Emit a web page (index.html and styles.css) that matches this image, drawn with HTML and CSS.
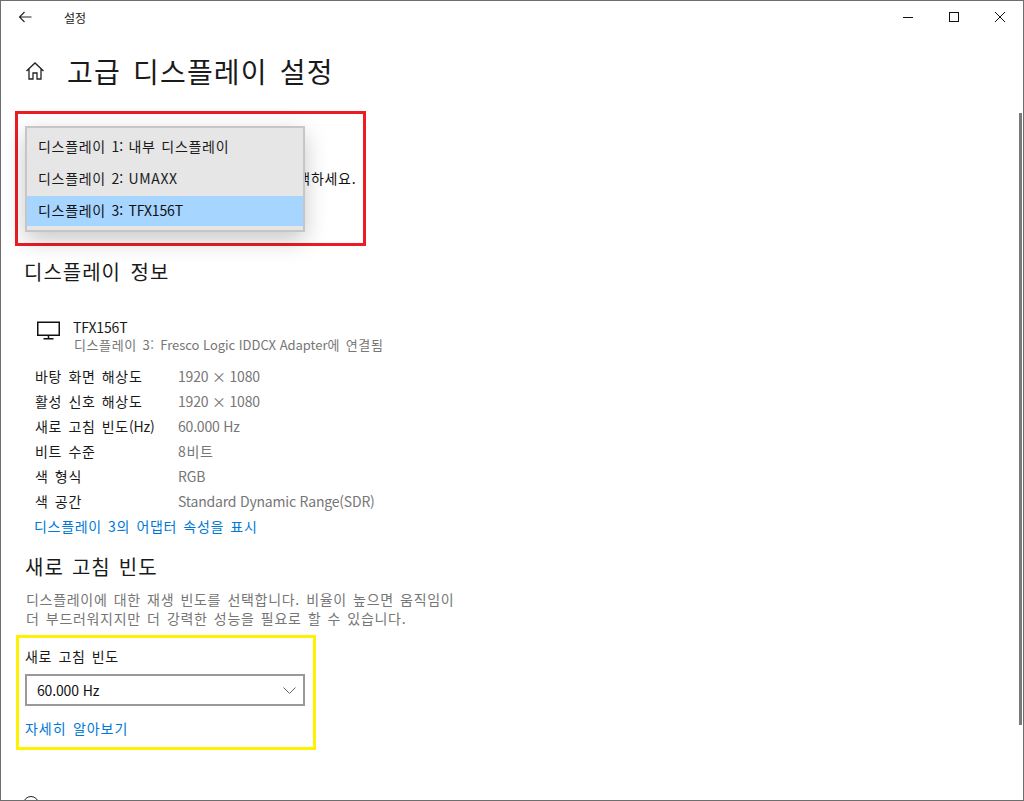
FILE: index.html
```html
<!DOCTYPE html>
<html lang="ko">
<head>
<meta charset="utf-8">
<title>설정</title>
<link rel="stylesheet" href="styles.css">
</head>
<body>
<div class="window">
  <header class="titlebar">
    <div class="titlebar-left">
      <svg class="back" width="14" height="14" viewBox="0 0 14 14"><path d="M13.500 7H1.500M6.500 2 1.500 7l5 5" fill="none" stroke="#222" stroke-width="1.100"/></svg>
      <span class="app-name">설정</span>
    </div>
    <div class="caption">
      <svg width="12" height="12" viewBox="0 0 12 12"><path d="M1 6.500h10" stroke="#111" stroke-width="1"/></svg>
      <svg width="12" height="12" viewBox="0 0 12 12"><rect x="1.500" y="1.500" width="9" height="9" fill="none" stroke="#111" stroke-width="1"/></svg>
      <svg width="12" height="12" viewBox="0 0 12 12"><path d="M1 1l10 10M11 1 1 11" stroke="#111" stroke-width="1"/></svg>
    </div>
  </header>
  <main class="content">
    <div class="page-head">
      <svg class="home" width="20" height="18" viewBox="0 0 20 18"><path d="M1.500 9 10 1l8.500 8M4 7v10h4v-6h4v6h4V7" fill="none" stroke="#222" stroke-width="1.300"/></svg>
      <h1>고급 디스플레이 설정</h1>
    </div>
    <section class="marked red">
      <p class="choose">설정을 보거나 변경하려는 디스플레이를 선택하세요.</p>
      <ul class="menu">
        <li>디스플레이 <span class="la">1:</span> 내부 디스플레이</li>
        <li>디스플레이 <span class="la">2:</span> <span class="la wide">UMAXX</span></li>
        <li class="selected">디스플레이 <span class="la">3:</span> <span class="la">TFX156T</span></li>
      </ul>
    </section>
    <h2 class="info-title">디스플레이 정보</h2>
    <div class="monitor">
      <svg width="23" height="19" viewBox="0 0 23 19"><path d="M.75 1.250h21.500v13H.75zM11.500 14.500v3.500M6.500 17.750h10" fill="none" stroke="#111" stroke-width="1.500"/></svg>
      <div class="monitor-text">
        <div class="monitor-name la">TFX156T</div>
        <div class="monitor-sub">디스플레이 3: <span class="la">Fresco Logic IDDCX Adapter</span>에 연결됨</div>
      </div>
    </div>
    <dl class="specs">
      <div><dt>바탕 화면 해상도</dt><dd class="la">1920 × 1080</dd></div>
      <div><dt>활성 신호 해상도</dt><dd class="la">1920 × 1080</dd></div>
      <div><dt>새로 고침 빈도<span class="la">(Hz)</span></dt><dd class="la">60.000 Hz</dd></div>
      <div><dt>비트 수준</dt><dd>8비트</dd></div>
      <div><dt>색 형식</dt><dd class="la">RGB</dd></div>
      <div><dt>색 공간</dt><dd class="la">Standard Dynamic Range(SDR)</dd></div>
    </dl>
    <a class="link adapter" href="#">디스플레이 3의 어댑터 속성을 표시</a>
    <h2 class="rate-title">새로 고침 빈도</h2>
    <p class="desc">디스플레이에 대한 재생 빈도를 선택합니다. 비율이 높으면 움직임이<br>더 부드러워지지만 더 강력한 성능을 필요로 할 수 있습니다.</p>
    <section class="marked yellow">
      <div class="field-label">새로 고침 빈도</div>
      <div class="select">
        <span class="la">60.000 Hz</span>
        <svg width="13" height="7" viewBox="0 0 13 7"><path d="M.5.500 6.500 6.500 12.500.500" fill="none" stroke="#666" stroke-width="1"/></svg>
      </div>
      <a class="link more" href="#">자세히 알아보기</a>
    </section>
    <div class="help">
      <svg width="18" height="18" viewBox="0 0 18 18"><circle cx="9" cy="9" r="7.500" fill="none" stroke="#222" stroke-width="1"/></svg>
      <a class="link" href="#">도움 받기</a>
    </div>
  </main>
  <div class="scrollbar"></div>
</div>
</body>
</html>
```
FILE: styles.css
```css
* { box-sizing: border-box; }
html, body { margin: 0; padding: 0; }
body {
  width: 1024px;
  height: 801px;
  overflow: hidden;
  background: #fff;
  font-family: "Noto Sans CJK KR", "Noto Sans", sans-serif;
  font-size: 14px;
  letter-spacing: 0.7px;
  word-spacing: 1.6px;
  color: #111;
}
.la { letter-spacing: -0.15px; word-spacing: 0; }
.la.wide { letter-spacing: 0.6px; }
.window {
  position: relative;
  width: 1024px;
  height: 801px;
  border: 1px solid #6e6e6e;
  overflow: hidden;
  display: flex;
  flex-direction: column;
}
.titlebar {
  height: 32px;
  flex: none;
  display: flex;
  justify-content: space-between;
  align-items: center;
}
.titlebar-left { display: flex; align-items: center; padding-left: 17px; }
.app-name { margin-left: 32px; font-size: 12px; letter-spacing: 0; color: #222; }
.caption { display: flex; gap: 34px; padding-right: 17px; }
.content { flex: 1; padding-left: 24px; }
.page-head {
  display: flex;
  align-items: center;
  height: 40px;
  margin-top: 18px;
}
.home { flex: none; margin-left: 0; }
h1 {
  margin: 0 0 0 22px;
  font-size: 28px;
  font-weight: 400;
  letter-spacing: 1.2px;
  word-spacing: 3px;
  line-height: 40px;
  color: #1a1a1a;
}
.marked { position: relative; }
.marked::after {
  content: "";
  position: absolute;
  inset: 0;
  border-style: solid;
  border-width: 3px;
  pointer-events: none;
}
.red {
  width: 351px;
  height: 135px;
  margin: 20px 0 0 -10px;
  padding: 57px 0 0 13px;
}
.red::after { border-color: #ed1c24; }
.choose { margin: 0; line-height: 20px; white-space: nowrap; }
.menu {
  position: absolute;
  left: 10px;
  top: 15px;
  z-index: 1;
  width: 280px;
  height: 106px;
  margin: 0;
  padding: 2px 0 0;
  list-style: none;
  background: #e6e6e6;
  border: 2px solid #c6c6c6;
  box-shadow: 0 8px 22px rgba(0, 0, 0, 0.22);
}
.menu li { height: 32px; line-height: 32px; padding-left: 11px; word-spacing: 1px; color: #1a1a1a; }
.menu .selected { height: 30px; line-height: 28px; background: #a6d5ff; color: #111; margin-top: 2px; }
h2 {
  margin: 0;
  font-size: 20px;
  font-weight: 400;
  letter-spacing: 1px;
  word-spacing: 3px;
  line-height: 28px;
  color: #1a1a1a;
}
.info-title { margin: 12px 0 0 -1px; }
.monitor { display: flex; margin: 27px 0 0 12px; }
.monitor svg { flex: none; margin-top: 8px; }
.monitor-text { margin-left: 13px; }
.monitor-name { line-height: 20px; margin-top: 4px; color: #1a1a1a; }
.monitor-sub { padding-left: 1px; font-size: 13px; letter-spacing: 0.6px; word-spacing: 1.500px; line-height: 16px; color: #767676; }
.monitor-sub .la { letter-spacing: -0.03px; }
.specs { margin: 11px 0 0 10px; }
.specs div { display: flex; height: 25px; line-height: 25px; }
.specs dt { width: 143px; color: #1a1a1a; }
.specs dd { margin: 0; color: #767676; }
.specs dd.la { letter-spacing: -0.2px; }
.link { color: #0078d7; text-decoration: none; }
.adapter { display: block; margin-left: 9px; line-height: 25px; }
.rate-title { margin-top: 14px; word-spacing: 1.500px; }
.desc { margin: 9px 0 0 1px; line-height: 19px; color: #767676; }
.yellow {
  width: 300px;
  height: 115px;
  margin: 7px 0 0 -9px;
  padding: 11px 0 0 9px;
}
.yellow::after { border-color: #fff200; }
.field-label { line-height: 20px; color: #1a1a1a; }
.select {
  width: 280px;
  height: 32px;
  margin-top: 8px;
  padding: 0 7px 0 10px;
  border: 2px solid #999;
  display: flex;
  align-items: center;
  justify-content: space-between;
}
.more { display: block; margin-top: 12px; line-height: 20px; letter-spacing: 0.950px; }
.help { display: flex; align-items: flex-start; margin: 45px 0 0 -3px; gap: 15px; }
.help .link { line-height: 20px; margin-top: 2px; }
.scrollbar {
  position: absolute;
  left: 1018px;
  top: 112px;
  width: 3px;
  height: 612px;
  background: #7a7a7a;
}
```
